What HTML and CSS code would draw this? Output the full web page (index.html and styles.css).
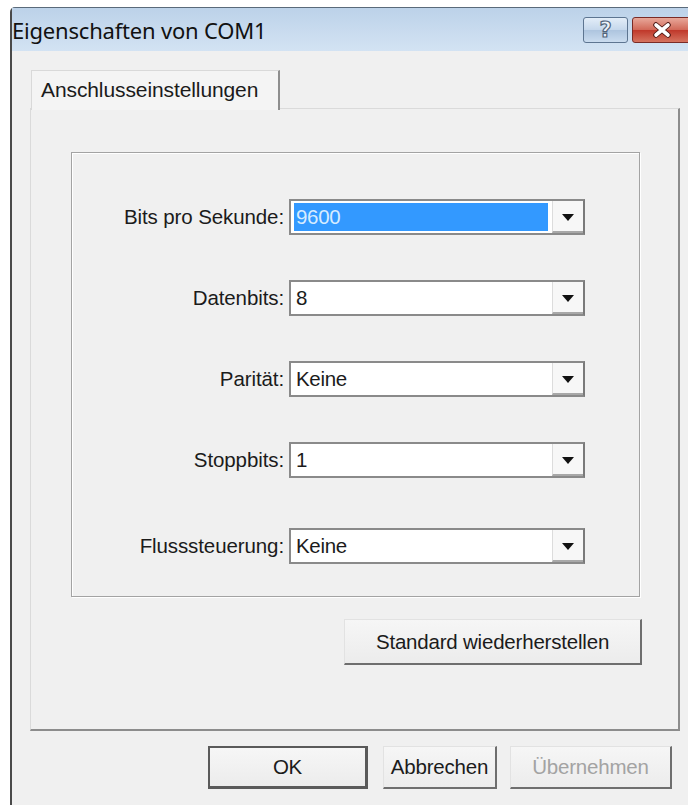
FILE: index.html
```html
<!DOCTYPE html>
<html lang="de">
<head>
<meta charset="utf-8">
<title>Eigenschaften von COM1</title>
<link rel="stylesheet" href="styles.css">
</head>
<body>
<div class="window">
  <div class="titlebar">
    <span class="title">Eigenschaften von COM1</span>
    <div class="caption-buttons">
      <span class="cap-btn cap-help">?</span>
      <span class="cap-btn cap-close">
        <svg width="20" height="16" viewBox="0 0 20 16"><path d="M4 3 L16 13 M16 3 L4 13" stroke="#4a1512" stroke-width="5.5" stroke-linecap="round"/><path d="M4 3 L16 13 M16 3 L4 13" stroke="#ffffff" stroke-width="3.6" stroke-linecap="round"/></svg>
      </span>
    </div>
  </div>
  <div class="client">
    <div class="tabs">
      <div class="tab">Anschlusseinstellungen</div>
    </div>
    <div class="tabpanel">
      <div class="group">
        <div class="row">
          <span class="label">Bits pro Sekunde:</span>
          <div class="combo"><span class="value selected">9600</span><span class="drop"></span></div>
        </div>
        <div class="row">
          <span class="label">Datenbits:</span>
          <div class="combo"><span class="value">8</span><span class="drop"></span></div>
        </div>
        <div class="row">
          <span class="label">Parität:</span>
          <div class="combo"><span class="value">Keine</span><span class="drop"></span></div>
        </div>
        <div class="row">
          <span class="label">Stoppbits:</span>
          <div class="combo"><span class="value">1</span><span class="drop"></span></div>
        </div>
        <div class="row row-last">
          <span class="label">Flusssteuerung:</span>
          <div class="combo"><span class="value">Keine</span><span class="drop"></span></div>
        </div>
      </div>
      <div class="restore-row">
        <span class="btn btn-restore">Standard wiederherstellen</span>
      </div>
    </div>
    <div class="dialog-buttons">
      <span class="btn btn-ok">OK</span>
      <span class="btn btn-cancel">Abbrechen</span>
      <span class="btn btn-apply disabled">Übernehmen</span>
    </div>
  </div>
</div>
</body>
</html>
```

FILE: styles.css
```css
html, body {
  margin: 0;
  padding: 0;
  background: #ffffff;
  overflow: hidden;
}

body {
  width: 688px;
  height: 805px;
  font-family: "Liberation Sans", Arial, sans-serif;
  color: #1b1b1b;
}

.window {
  margin: 7px 0 0 10px;
  width: 700px;
  height: 820px;
  border-left: 2px solid #4a4a4a;
  border-top: 1px solid #5a6a7a;
  border-top-left-radius: 5px;
  background: #c9dcef;
  display: flex;
  flex-direction: column;
}

/* caption */
.titlebar {
  height: 43px;
  display: flex;
  align-items: center;
  background: linear-gradient(#bcd2e9, #cadcef 60%, #d3e3f3);
  position: relative;
}

.title {
  font-family: "Noto Sans", "Open Sans", sans-serif;
  font-size: 22px;
  color: #111;
  letter-spacing: -0.2px;
}

.caption-buttons {
  position: absolute;
  top: 9px;
  left: 571px;
  display: flex;
  gap: 4px;
}

.cap-btn {
  height: 26px;
  border: 1px solid #5d7591;
  border-radius: 3px;
  display: flex;
  align-items: center;
  justify-content: center;
  box-sizing: border-box;
}

.cap-help {
  width: 45px;
  background: linear-gradient(#e3edf8, #c6d8ec 48%, #aec5df 52%, #cadcef);
  font-family: "DejaVu Sans", sans-serif;
  font-weight: bold;
  font-size: 21px;
  line-height: 1;
  color: #eef4fa;
  -webkit-text-stroke: 1.2px #52647a;
}

.cap-close {
  width: 60px;
  border-color: #7a2b26;
  background: linear-gradient(#e8a89a, #d26a5a 48%, #c0392b 52%, #d5735f);
}

/* client area */
.client {
  flex: 1;
  background: #f0f0f0;
  padding: 19px 0 0 18px;
  box-sizing: border-box;
}

.tabs {
  display: flex;
  padding-left: 1px;
  height: 40px;
  position: relative;
  z-index: 1;
}

.tab {
  width: 249px;
  box-sizing: border-box;
  border: 1px solid #d9d9d9;
  border-right: 2px solid #8e8e8e;
  border-bottom: none;
  background: #f4f4f4;
  font-size: 21px;
  padding: 7px 0 0 9px;
  letter-spacing: -0.1px;
}

.tabpanel {
  width: 650px;
  height: 623px;
  box-sizing: border-box;
  border: 1px solid #dadada;
  border-right: 2px solid #8c8c8c;
  border-bottom: 2px solid #8c8c8c;
  margin-top: -2px;
  padding: 43px 0 0 40px;
}

/* grouped settings */
.group {
  width: 569px;
  height: 445px;
  box-sizing: border-box;
  border: 1px solid #a3a3a3;
  box-shadow: inset 1px 1px 0 #ffffff, 1px 1px 0 #ffffff;
  padding: 46px 0 0 0;
  display: flex;
  flex-direction: column;
  gap: 45px;
}

.row {
  display: flex;
  align-items: center;
  height: 36px;
}

.row-last {
  margin-top: 5px;
}

.label {
  width: 217px;
  text-align: right;
  font-size: 20.5px;
  letter-spacing: -0.1px;
  padding-right: 5px;
  box-sizing: border-box;
}

.combo {
  width: 296px;
  height: 36px;
  box-sizing: border-box;
  border: 2px solid #8a8a8a;
  border-right-color: #7a7a7a;
  background: #ffffff;
  display: flex;
  align-items: stretch;
  padding: 2px 0 2px 3px;
}

.value {
  flex: 1;
  font-size: 20.5px;
  letter-spacing: -0.3px;
  display: flex;
  align-items: center;
  padding-left: 2px;
}

.value.selected {
  background: #3399ff;
  color: #d7ecff;
  margin-right: 4px;
}

.drop {
  width: 30px;
  margin: -2px 0 -2px 0;
  border-left: 1px solid #dcdcdc;
  border-bottom: 2px solid #a8a8a8;
  background: #f7f7f7;
  position: relative;
}

.drop::after {
  content: "";
  position: absolute;
  left: 9px;
  top: 13px;
  border-left: 6px solid transparent;
  border-right: 6px solid transparent;
  border-top: 7px solid #111;
}

.restore-row {
  display: flex;
  justify-content: flex-end;
  width: 571px;
  margin-top: 22px;
}

/* push buttons */
.btn {
  display: flex;
  align-items: center;
  justify-content: center;
  box-sizing: border-box;
  background: linear-gradient(#f6f6f6, #ececec);
  border: 1px solid #e2e2e2;
  border-right: 2px solid #6e6e6e;
  border-bottom: 2px solid #6e6e6e;
  font-size: 20.5px;
  letter-spacing: -0.2px;
  color: #1b1b1b;
}

.btn-restore {
  width: 298px;
  height: 46px;
}

.dialog-buttons {
  display: flex;
  gap: 15px;
  margin-top: 15px;
  padding-left: 178px;
}

.btn-ok {
  width: 160px;
  height: 43px;
  border: 2px solid #5a5a5a;
  border-right-width: 3px;
  border-bottom-width: 3px;
}

.btn-cancel {
  width: 114px;
  height: 43px;
}

.btn-apply {
  width: 162px;
  height: 43px;
  margin-left: -2px;
}

.disabled {
  color: #a3a3a3;
}
```
